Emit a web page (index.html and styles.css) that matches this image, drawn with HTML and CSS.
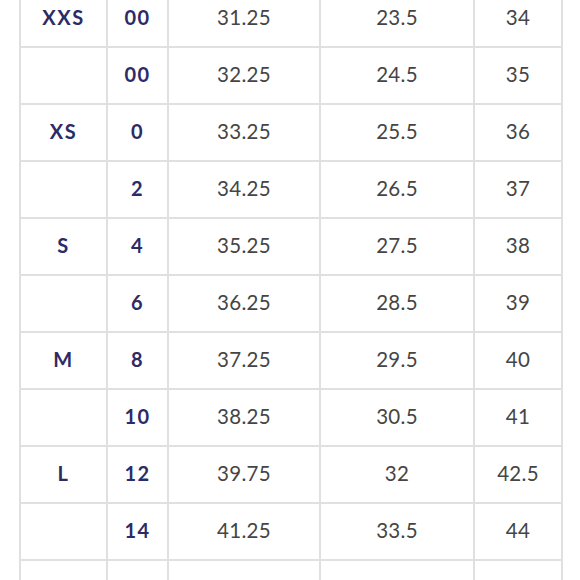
FILE: index.html
```html
<!DOCTYPE html>
<html lang="en">
<head>
<meta charset="utf-8">
<title>Size chart</title>
<link rel="stylesheet" href="styles.css">
</head>
<body>
<div class="chart">
  <div class="size">XXS</div><div class="num">00</div><div class="val">31.25</div><div class="val">23.5</div><div class="val">34</div>
  <div class="size"></div><div class="num">00</div><div class="val">32.25</div><div class="val">24.5</div><div class="val">35</div>
  <div class="size">XS</div><div class="num">0</div><div class="val">33.25</div><div class="val">25.5</div><div class="val">36</div>
  <div class="size"></div><div class="num">2</div><div class="val">34.25</div><div class="val">26.5</div><div class="val">37</div>
  <div class="size">S</div><div class="num">4</div><div class="val">35.25</div><div class="val">27.5</div><div class="val">38</div>
  <div class="size"></div><div class="num">6</div><div class="val">36.25</div><div class="val">28.5</div><div class="val">39</div>
  <div class="size">M</div><div class="num">8</div><div class="val">37.25</div><div class="val">29.5</div><div class="val">40</div>
  <div class="size"></div><div class="num">10</div><div class="val">38.25</div><div class="val">30.5</div><div class="val">41</div>
  <div class="size">L</div><div class="num">12</div><div class="val">39.75</div><div class="val">32</div><div class="val">42.5</div>
  <div class="size"></div><div class="num">14</div><div class="val">41.25</div><div class="val">33.5</div><div class="val">44</div>
  <div class="size"></div><div class="num"></div><div class="val"></div><div class="val"></div><div class="val"></div>
</div>
</body>
</html>
```

FILE: styles.css
```css
html, body {
  margin: 0;
  padding: 0;
  background: #ffffff;
  overflow: hidden;
}

.chart {
  display: grid;
  grid-template-columns: 85px 59px 150px 152px 86px;
  grid-auto-rows: 55px;
  gap: 2px;
  padding: 2px;
  width: max-content;
  margin: -11px 0 0 19px;
  background: #e0e0e0;
  font-family: "Lato", "Open Sans", sans-serif;
  font-size: 20px;
}

.chart > div {
  background: #ffffff;
  display: flex;
  align-items: center;
  justify-content: center;
  padding-bottom: 3px;
  box-sizing: border-box;
}

.size,
.num {
  color: #2d2b66;
  font-weight: 700;
  letter-spacing: 1.5px;
}

.val {
  color: #454545;
  font-weight: 400;
  font-size: 20.5px;
  letter-spacing: 0.3px;
}
```
